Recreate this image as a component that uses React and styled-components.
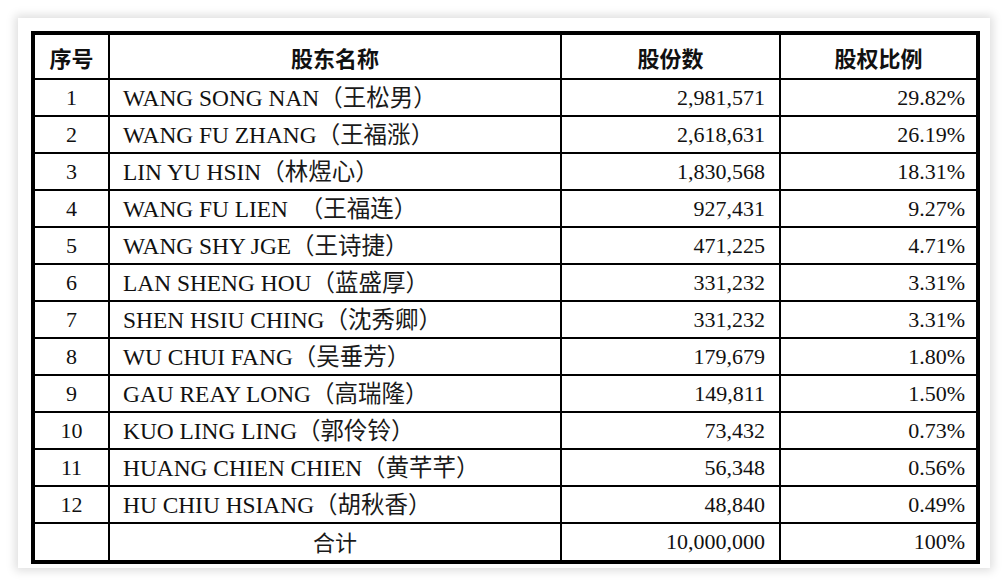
import React from "react";
import styled, { createGlobalStyle } from "styled-components";

const GlobalStyle = createGlobalStyle`
  html, body {
    margin: 0;
    padding: 0;
    background: #ffffff;
  }
`;

const Page = styled.div`
  width: 1008px;
  height: 585px;
  box-sizing: border-box;
  padding: 18px 18px 17px 18px;
`;

const Card = styled.div`
  width: 972px;
  height: 550px;
  box-sizing: border-box;
  background: #fff;
  padding: 13px 10px 6px 13px;
  box-shadow: 0 0 9px 3px rgba(0, 0, 0, 0.13);
`;

const Table = styled.table`
  width: 949px;
  border: 4px solid #000;
  border-spacing: 0;
  border-collapse: separate;
  table-layout: fixed;
  color: #111;
  font-family: "Liberation Serif", "Noto Sans CJK SC", serif;
  font-size: 22px;
`;

const HeadCell = styled.th`
  height: 43px;
  padding: 0;
  border-right: ${(p) => (p.$last ? "none" : "2px solid #000")};
  border-bottom: 2px solid #000;
  font-family: "Noto Sans CJK SC", sans-serif;
  font-weight: 700;
  font-size: 22px;
  text-align: center;
  vertical-align: middle;
  color: #111;
`;

const Cell = styled.td`
  height: ${(p) => (p.$end ? "36px" : "35px")};
  padding: ${(p) =>
    p.$align === "right" ? `0 ${p.$pr || 14}px 0 0` : p.$align === "left" ? "0 0 0 13px" : "0"};
  border-right: ${(p) => (p.$last ? "none" : "2px solid #000")};
  border-bottom: ${(p) => (p.$end ? "none" : "2px solid #000")};
  text-align: ${(p) => p.$align || "center"};
  vertical-align: middle;
  white-space: nowrap;
  line-height: 1;
  font-size: ${(p) => (p.$wide ? "23.4px" : "22px")};
`;

const Cn = styled.span`
  font-family: "Noto Sans CJK SC", sans-serif;
  font-size: ${(p) => (p.$small ? "22px" : "23.5px")};
  color: #1a1a1a;
`;

const rows = [
  ["1", "WANG SONG NAN", "王松男", "2,981,571", "29.82%"],
  ["2", "WANG FU ZHANG", "王福涨", "2,618,631", "26.19%"],
  ["3", "LIN YU HSIN", "林煜心", "1,830,568", "18.31%"],
  ["4", "WANG FU LIEN\u00a0\u00a0", "王福连", "927,431", "9.27%"],
  ["5", "WANG SHY JGE", "王诗捷", "471,225", "4.71%"],
  ["6", "LAN SHENG HOU", "蓝盛厚", "331,232", "3.31%"],
  ["7", "SHEN HSIU CHING", "沈秀卿", "331,232", "3.31%"],
  ["8", "WU CHUI FANG", "吴垂芳", "179,679", "1.80%"],
  ["9", "GAU REAY LONG", "高瑞隆", "149,811", "1.50%"],
  ["10", "KUO LING LING", "郭伶铃", "73,432", "0.73%"],
  ["11", "HUANG CHIEN CHIEN", "黄芊芊", "56,348", "0.56%"],
  ["12", "HU CHIU HSIANG", "胡秋香", "48,840", "0.49%"],
];

export default function App() {
  return (
    <>
      <GlobalStyle />
      <Page>
        <Card>
          <Table>
            <colgroup>
              <col style={{ width: 75 }} />
              <col style={{ width: 452 }} />
              <col style={{ width: 219 }} />
              <col style={{ width: 195 }} />
            </colgroup>
            <thead>
              <tr>
                <HeadCell>序号</HeadCell>
                <HeadCell>股东名称</HeadCell>
                <HeadCell>股份数</HeadCell>
                <HeadCell $last>股权比例</HeadCell>
              </tr>
            </thead>
            <tbody>
              {rows.map(([no, name, cn, shares, pct]) => (
                <tr key={no}>
                  <Cell>{no}</Cell>
                  <Cell $align="left" $wide>
                    {name}
                    <Cn>（{cn}）</Cn>
                  </Cell>
                  <Cell $align="right">{shares}</Cell>
                  <Cell $align="right" $pr={11} $last>
                    {pct}
                  </Cell>
                </tr>
              ))}
              <tr>
                <Cell $end></Cell>
                <Cell $end>
                  <Cn $small>合计</Cn>
                </Cell>
                <Cell $end $align="right">
                  10,000,000
                </Cell>
                <Cell $end $align="right" $pr={11} $last>
                  100%
                </Cell>
              </tr>
            </tbody>
          </Table>
        </Card>
      </Page>
    </>
  );
}
